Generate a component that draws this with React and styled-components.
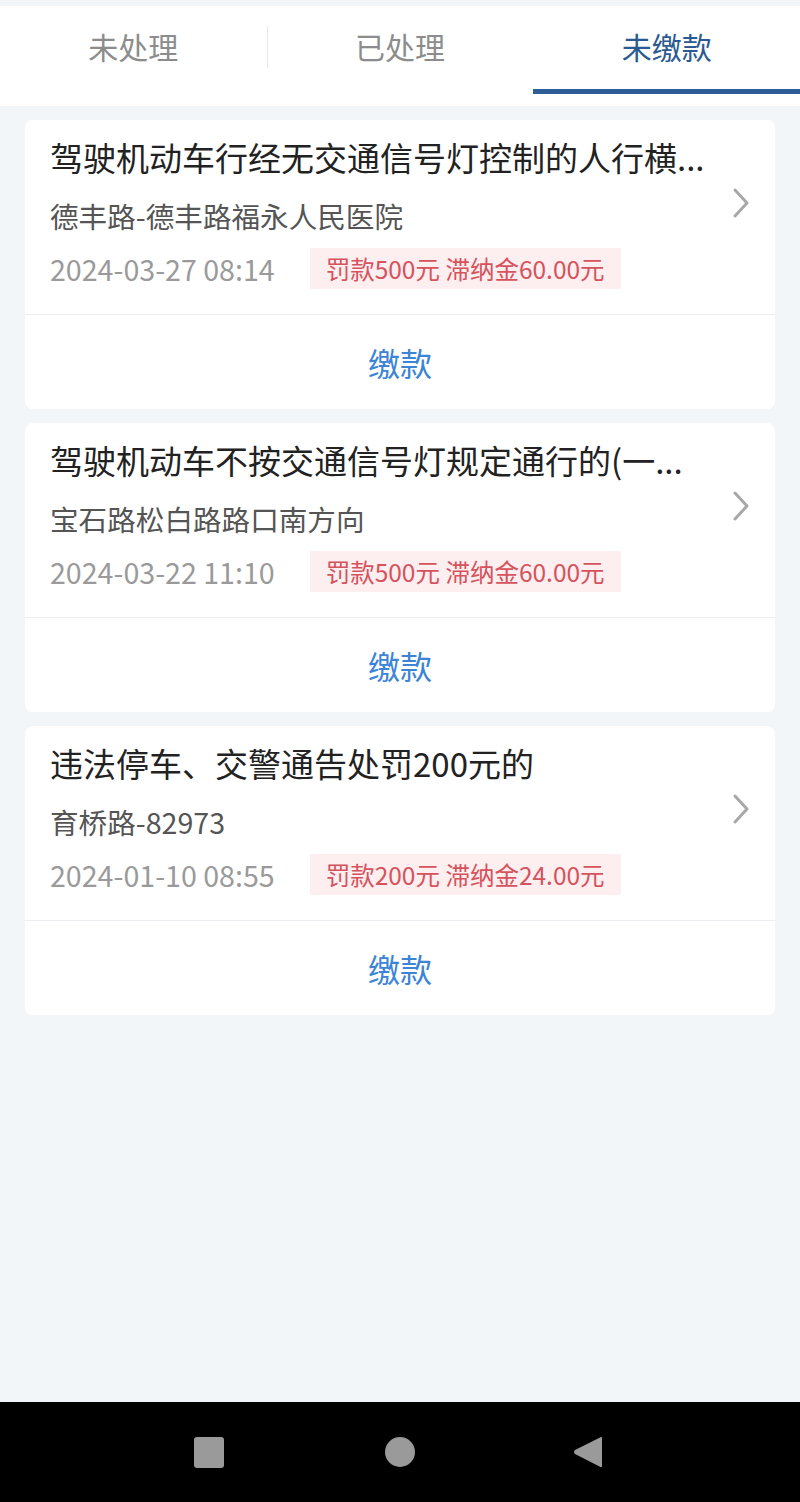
import React, { useState } from 'react';
import styled, { createGlobalStyle } from 'styled-components';

const GlobalStyle = createGlobalStyle`
  html, body {
    margin: 0;
    padding: 0;
    background: #f3f6f9;
    font-family: "Noto Sans CJK SC", "Noto Sans", sans-serif;
  }
  * { box-sizing: border-box; }
`;

const tabs = ['未处理', '已处理', '未缴款'];

// titles are shown already shortened, the way the list prints them
const records = [
  {
    title: '驾驶机动车行经无交通信号灯控制的人行横...',
    place: '德丰路-德丰路福永人民医院',
    time: '2024-03-27 08:14',
    fine: '罚款500元 滞纳金60.00元',
  },
  {
    title: '驾驶机动车不按交通信号灯规定通行的(一...',
    place: '宝石路松白路路口南方向',
    time: '2024-03-22 11:10',
    fine: '罚款500元 滞纳金60.00元',
  },
  {
    title: '违法停车、交警通告处罚200元的',
    place: '育桥路-82973',
    time: '2024-01-10 08:55',
    fine: '罚款200元 滞纳金24.00元',
  },
];

const Screen = styled.div`
  width: 800px;
  height: 1502px;
  display: flex;
  flex-direction: column;
  background: #f3f6f9;
  overflow: hidden;
`;

const TopStrip = styled.div`
  height: 6px;
  background: #f2f5f8;
`;

const TabBar = styled.div`
  height: 100px;
  background: #fff;
  display: flex;
  align-items: flex-start;
`;

const Tab = styled.button`
  flex: 1;
  height: 88px;
  border: none;
  background: none;
  padding: 0 0 3px;
  font-family: inherit;
  font-size: 30px;
  color: ${({ $active }) => ($active ? '#2b5a92' : '#8c8c8c')};
  border-bottom: 5px solid ${({ $active }) => ($active ? '#2e5e98' : 'transparent')};
  display: flex;
  align-items: center;
  justify-content: center;
  position: relative;
  cursor: pointer;

  & + &::before {
    content: '';
    position: absolute;
    left: 0;
    top: 20px;
    height: 42px;
    width: 1px;
    background: #e8e8e8;
  }
`;

const List = styled.div`
  display: flex;
  flex-direction: column;
  gap: 14px;
  padding: 14px 25px 0;
  flex: 1;
`;

const Card = styled.div`
  background: #fff;
  border-radius: 8px;
  overflow: hidden;
`;

const Info = styled.div`
  display: flex;
  align-items: center;
  padding: 14px 24px 25px 25px;
  border-bottom: 1px solid #eceef1;
`;

const Body = styled.div`
  flex: 1;
  min-width: 0;
  display: flex;
  flex-direction: column;
`;

const Title = styled.div`
  font-size: 33px;
  line-height: 46px;
  color: #222;
  white-space: nowrap;
`;

const Place = styled.div`
  margin-top: 16px;
  font-size: 28.6px;
  line-height: 40px;
  color: #555;
`;

const Meta = styled.div`
  margin-top: 12px;
  display: flex;
  align-items: center;
  gap: 35px;
`;

const Time = styled.span`
  font-size: 28.6px;
  color: #9a9a9a;
`;

const Fine = styled.span`
  height: 41px;
  display: inline-flex;
  align-items: center;
  padding: 0 16px;
  background: #fdeeef;
  color: #d6525d;
  font-size: 24.5px;
`;

const Chevron = styled.svg`
  width: 20px;
  height: 32px;
  flex: none;
  margin-top: -18px;
`;

const PayButton = styled.button`
  width: 100%;
  height: 94px;
  border: none;
  background: #fff;
  font-family: inherit;
  font-size: 32px;
  color: #3c84d6;
  cursor: pointer;
`;

const NavBar = styled.div`
  height: 100px;
  background: #000;
  display: flex;
  align-items: center;
  padding-left: 194px;
`;

const NavSquare = styled.div`
  width: 30px;
  height: 31px;
  border-radius: 3px;
  background: #9a9a9a;
`;

const NavCircle = styled.div`
  width: 30px;
  height: 30px;
  margin-left: 161px;
  border-radius: 50%;
  background: #9a9a9a;
`;

const NavBack = styled.svg`
  margin-left: 158px;
`;

export default function App() {
  const [active, setActive] = useState(2);
  return (
    <>
      <GlobalStyle />
      <Screen>
        <TopStrip />
        <TabBar>
          {tabs.map((t, i) => (
            <Tab key={t} $active={i === active} onClick={() => setActive(i)}>
              {t}
            </Tab>
          ))}
        </TabBar>
        <List>
          {records.map((r) => (
            <Card key={r.time}>
              <Info>
                <Body>
                  <Title>{r.title}</Title>
                  <Place>{r.place}</Place>
                  <Meta>
                    <Time>{r.time}</Time>
                    <Fine>{r.fine}</Fine>
                  </Meta>
                </Body>
                <Chevron viewBox="0 0 20 32">
                  <path d="M4 3 L16 16 L4 29" fill="none" stroke="#a8a8a8" strokeWidth="3" strokeLinecap="round" strokeLinejoin="round" />
                </Chevron>
              </Info>
              <PayButton>缴款</PayButton>
            </Card>
          ))}
        </List>
        <NavBar>
          <NavSquare />
          <NavCircle />
          <NavBack width="30" height="34" viewBox="0 0 30 34">
            <path d="M28 2 Q29 1 29 3 L29 31 Q29 33 27.5 32 L2 19 Q0 17 2 15 Z" fill="#9a9a9a" />
          </NavBack>
        </NavBar>
      </Screen>
    </>
  );
}
